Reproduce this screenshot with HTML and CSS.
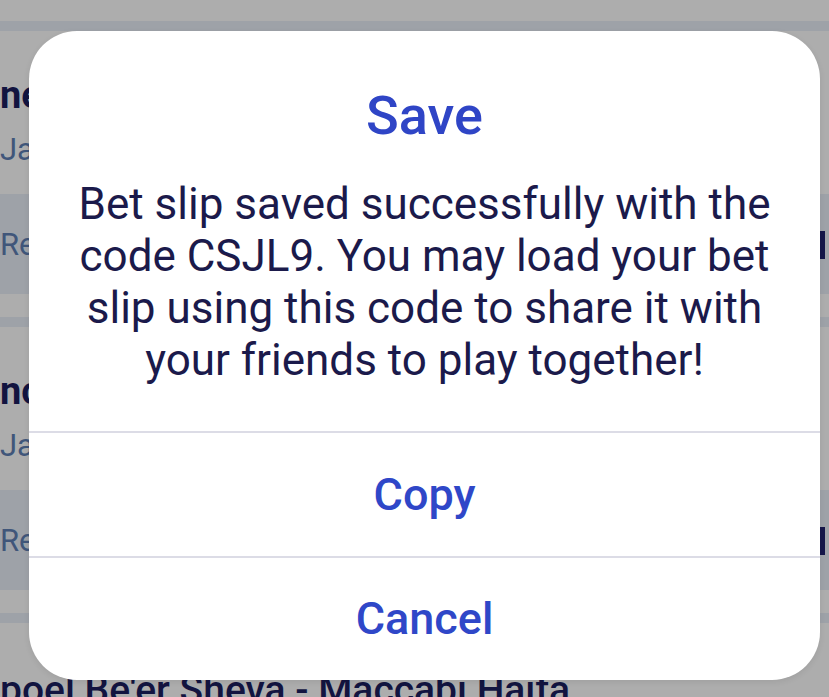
FILE: index.html
```html
<!DOCTYPE html>
<html lang="en">
<head>
    <meta charset="UTF-8">
    <meta name="viewport" content="width=device-width, initial-scale=1.0">
    <title>Save bet slip</title>
    <link rel="stylesheet" href="styles.css">
</head>
<body>
    <!-- Lista de partidos detrás del diálogo (oscurecida) -->
    <div class="feed">
        <div class="feed-top"></div>

        <div class="card">
            <div class="card-sep"></div>
            <div class="card-head">
                <div class="card-title">nes Ziona - Hapoel Haifa</div>
                <div class="card-date">Jan 20, 2024 19:00</div>
            </div>
            <div class="card-band">
                <span class="card-result">Result 1X2</span>
                <span class="card-pick"></span>
            </div>
            <div class="card-gap"></div>
        </div>

        <div class="card">
            <div class="card-sep"></div>
            <div class="card-head">
                <div class="card-title">nce Ashdod - Bnei Sakhnin</div>
                <div class="card-date">Jan 21, 2024 20:30</div>
            </div>
            <div class="card-band">
                <span class="card-result">Result 1X2</span>
                <span class="card-pick"></span>
            </div>
            <div class="card-gap"></div>
        </div>

        <div class="card">
            <div class="card-sep"></div>
            <div class="card-head">
                <div class="card-title">poel Be'er Sheva - Maccabi Haifa</div>
            </div>
        </div>
    </div>

    <!-- Diálogo de guardado -->
    <div class="dialog">
        <div class="dialog-body">
            <h1 class="dialog-title">Save</h1>
            <p class="dialog-text">Bet slip saved successfully with the code CSJL9. You may load your bet slip using this code to share it with your friends to play together!</p>
        </div>
        <button class="dialog-btn">Copy</button>
        <button class="dialog-btn">Cancel</button>
    </div>
</body>
</html>
```

FILE: styles.css
```css
html {
    overflow: hidden;
}
body {
    margin: 0;
    height: 697px;
    overflow: hidden;
    position: relative;
    background-color: #adadad;
    font-family: Roboto, "Noto Sans", sans-serif;
}
.feed-top {
    height: 21px;
}
.card-sep {
    height: 10px;
    background-color: #9ea2a8;
}
.card-head {
    height: 163px;
    padding-top: 42px;
    box-sizing: border-box;
}
.card-title {
    font-size: 38px;
    font-weight: 700;
    line-height: 44px;
    color: #121440;
    white-space: nowrap;
}
.card-date {
    margin-top: 13px;
    font-size: 31px;
    line-height: 40px;
    color: #40567a;
    white-space: nowrap;
}
.card-band {
    height: 100px;
    background-color: #9ea2a8;
    display: flex;
    align-items: center;
    justify-content: space-between;
}
.card-result {
    font-size: 31px;
    color: #40567a;
}
.card-pick {
    width: 5px;
    height: 28px;
    margin-right: 4px;
    align-self: flex-start;
    margin-top: 37px;
    background-color: #15164a;
}
.card-gap {
    height: 23px;
}
.card:last-child .card-head {
    padding-top: 45px;
}
.card:last-child .card-title {
    font-size: 39px;
    font-weight: 500;
}
.dialog {
    position: absolute;
    left: 29px;
    top: 31px;
    width: 791px;
    height: 649px;
    background-color: #ffffff;
    border-radius: 48px;
    display: flex;
    flex-direction: column;
    overflow: hidden;
    box-shadow: 0 2px 6px rgba(0, 0, 0, 0.08);
}
.dialog-body {
    padding: 55px 30px 45px;
    text-align: center;
}
.dialog-title {
    margin: 0;
    font-size: 54px;
    font-weight: 500;
    line-height: 60px;
    color: #2f45c6;
}
.dialog-text {
    margin: 32px 0 0;
    font-size: 44px;
    line-height: 52px;
    color: #1b1a4b;
}
.dialog-btn {
    height: 125px;
    border: none;
    border-top: 2px solid #dcdce6;
    background: none;
    font-family: Roboto, "Noto Sans", sans-serif;
    font-size: 45px;
    font-weight: 500;
    color: #2f47c8;
    padding: 0;
}
```
